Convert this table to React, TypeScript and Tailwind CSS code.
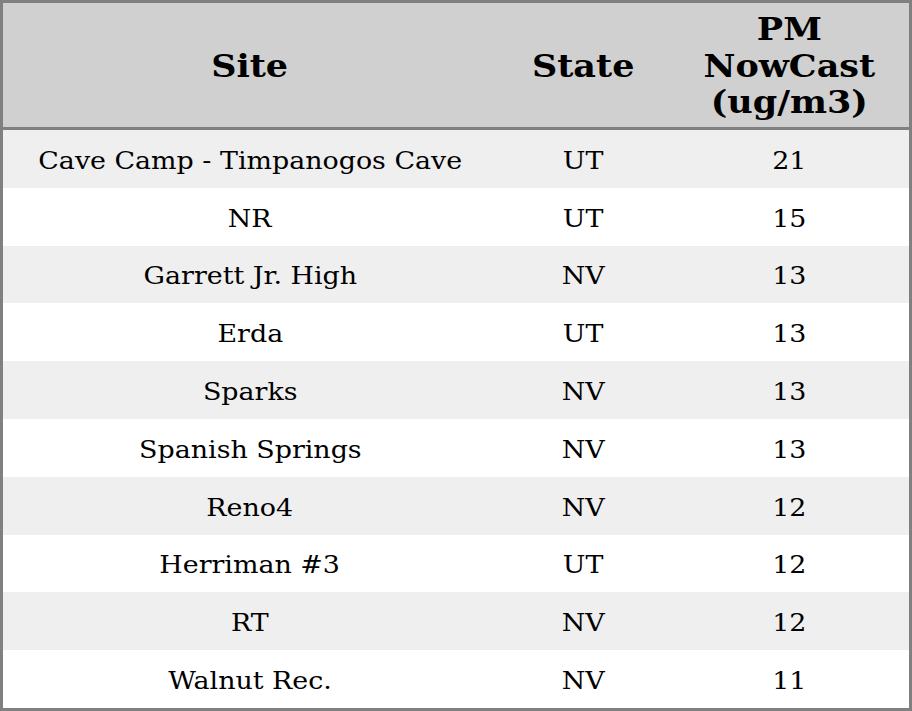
const rows = [
  { site: 'Cave Camp - Timpanogos Cave', state: 'UT', pm: 21 },
  { site: 'NR', state: 'UT', pm: 15 },
  { site: 'Garrett Jr. High', state: 'NV', pm: 13 },
  { site: 'Erda', state: 'UT', pm: 13 },
  { site: 'Sparks', state: 'NV', pm: 13 },
  { site: 'Spanish Springs', state: 'NV', pm: 13 },
  { site: 'Reno4', state: 'NV', pm: 12 },
  { site: 'Herriman #3', state: 'UT', pm: 12 },
  { site: 'RT', state: 'NV', pm: 12 },
  { site: 'Walnut Rec.', state: 'NV', pm: 11 },
]

// reference text is drawn slightly wide, so each label is stretched horizontally
function Cell({ children, head }: { children: React.ReactNode; head?: boolean }) {
  return (
    <div
      className={
        head
          ? 'flex items-center justify-center text-center pt-[2px]'
          : 'flex items-center justify-center text-center pt-[4px]'
      }
    >
      <span
        className={
          head
            ? 'inline-block scale-x-[1.11] text-[31.5px] font-bold leading-[36.5px]'
            : 'inline-block scale-x-[1.12] text-[24px] leading-[28px]'
        }
      >
        {children}
      </span>
    </div>
  )
}

export default function App() {
  return (
    <div className="w-[912px] h-[711px] bg-white font-['DejaVu_Serif',serif] text-black">
      <div className="w-[912px] h-[711px] border-[3px] border-[#808080] flex flex-col">
        <div className="grid grid-cols-[494px_172px_1fr] h-[124px] shrink-0 bg-[#d0d0d0] border-b-[3px] border-[#808080] box-content">
          <Cell head>Site</Cell>
          <Cell head>State</Cell>
          <Cell head>
            PM
            <br />
            NowCast
            <br />
            (ug/m3)
          </Cell>
        </div>
        {rows.map((r, i) => (
          <div
            key={i}
            className={
              i % 2 === 0
                ? 'grid grid-cols-[494px_172px_1fr] h-[57.8px] shrink-0 bg-[#efefef]'
                : 'grid grid-cols-[494px_172px_1fr] h-[57.8px] shrink-0 bg-white'
            }
          >
            <Cell>{r.site}</Cell>
            <Cell>{r.state}</Cell>
            <Cell>{r.pm}</Cell>
          </div>
        ))}
      </div>
    </div>
  )
}
